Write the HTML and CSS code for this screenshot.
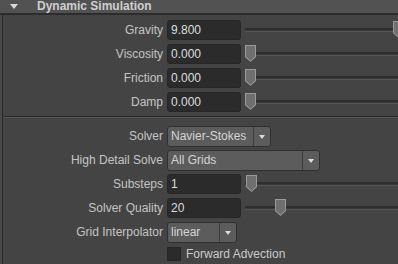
FILE: index.html
```html
<!DOCTYPE html>
<html lang="en">
  <head>
    <meta charset="UTF-8" />
    <title>Dynamic Simulation</title>
    <link rel="stylesheet" href="styles.css">
  </head>
  <body>
    <div class="section">
      <div class="section-head">
        <svg class="caret" width="8" height="5" viewBox="0 0 8 5">
          <polygon points="0,0 8,0 4,5" fill="#d8d8d8" />
        </svg>
        <span>Dynamic Simulation</span>
      </div>
      <div class="section-body">
        <div class="group">
          <div class="row">
            <label>Gravity</label>
            <div class="field">9.800</div>
            <div class="slider"><div class="track"></div><div class="thumb" style="left: 148px"></div></div>
          </div>
          <div class="row">
            <label>Viscosity</label>
            <div class="field">0.000</div>
            <div class="slider"><div class="track"></div><div class="thumb" style="left: 0px"></div></div>
          </div>
          <div class="row">
            <label>Friction</label>
            <div class="field">0.000</div>
            <div class="slider"><div class="track"></div><div class="thumb" style="left: 0px"></div></div>
          </div>
          <div class="row">
            <label>Damp</label>
            <div class="field">0.000</div>
            <div class="slider"><div class="track"></div><div class="thumb" style="left: 0px"></div></div>
          </div>
        </div>

        <div class="sep"></div>

        <div class="group">
          <div class="row">
            <label>Solver</label>
            <div class="dropdown solver">
              <span class="value">Navier-Stokes</span>
              <span class="arrow"></span>
            </div>
          </div>
          <div class="row">
            <label>High Detail Solve</label>
            <div class="dropdown detail">
              <span class="value">All Grids</span>
              <span class="arrow"></span>
            </div>
          </div>
          <div class="row">
            <label>Substeps</label>
            <div class="field">1</div>
            <div class="slider"><div class="track"></div><div class="thumb" style="left: 1px"></div></div>
          </div>
          <div class="row">
            <label>Solver Quality</label>
            <div class="field">20</div>
            <div class="slider"><div class="track"></div><div class="thumb" style="left: 30px"></div></div>
          </div>
          <div class="row">
            <label>Grid Interpolator</label>
            <div class="dropdown interp">
              <span class="value">linear</span>
              <span class="arrow"></span>
            </div>
          </div>
          <div class="row check-row">
            <label></label>
            <span class="checkbox"></span>
            <span class="check-label">Forward Advection</span>
          </div>
        </div>
      </div>
    </div>
  </body>
</html>
```

FILE: styles.css
```css
html,
body {
  height: 100%;
}
body {
  margin: 0;
  background-color: #484848;
  font-family: "Liberation Sans", Arial, sans-serif;
  font-size: 12px;
  color: #c4c4c4;
  overflow: hidden;
}
.section {
  display: flex;
  flex-direction: column;
  height: 100%;
}
.section-head {
  display: flex;
  align-items: center;
  flex-shrink: 0;
  height: 15px;
  margin-top: -2px;
  padding-left: 10px;
  background-color: #525252;
  border-bottom: 2px solid #2c2c2c;
  font-weight: bold;
  color: #cfcfcf;
}
.caret {
  margin-right: 19px;
  margin-top: 1px;
}
.section-body {
  flex: 1;
  margin-left: 2px;
  border-left: 1px solid #2a2a2a;
  background-color: #444444;
  padding-top: 5px;
}
.group {
  display: flex;
  flex-direction: column;
  gap: 4px;
}
.row {
  display: flex;
  align-items: center;
  height: 20px;
}
.row label {
  width: 160px;
  margin-right: 4px;
  text-align: right;
  flex-shrink: 0;
}
.field {
  box-sizing: border-box;
  width: 74px;
  height: 20px;
  line-height: 18px;
  padding-left: 3px;
  background-color: #2b2b2b;
  border: 1px solid #262626;
  border-radius: 3px;
  color: #dedede;
  flex-shrink: 0;
}
.slider {
  position: relative;
  flex: 1;
  height: 20px;
  margin-left: 4px;
}
.track {
  margin-top: 8px;
  height: 1px;
  border-top: 2px solid #2e2e2e;
  border-bottom: 1px solid #555555;
  background-color: #3a3a3a;
}
.thumb {
  position: absolute;
  top: 1px;
  width: 11px;
  height: 17px;
  background-color: #9a9a9a;
  clip-path: polygon(0 0, 100% 0, 100% 70%, 50% 100%, 0 70%);
}
.thumb::after {
  content: "";
  position: absolute;
  left: 1px;
  top: 1px;
  width: 9px;
  height: 15px;
  background-color: #6f6f6f;
  clip-path: polygon(0 0, 100% 0, 100% 68%, 50% 100%, 0 68%);
}
.sep {
  height: 1px;
  margin: 4px 0 8px;
  border-top: 1px solid #2c2c2c;
  background-color: #555555;
}
.dropdown {
  box-sizing: border-box;
  display: flex;
  height: 21px;
  background-color: #5c5c5c;
  border: 1px solid #303030;
  border-radius: 3px;
  color: #d4d4d4;
}
.dropdown .value {
  flex: 1;
  line-height: 19px;
  padding-left: 3px;
  border-right: 1px solid #3c3c3c;
}
.dropdown .arrow {
  position: relative;
  width: 16px;
}
.dropdown .arrow::after {
  content: "";
  position: absolute;
  left: 5px;
  top: 8px;
  border-left: 3px solid transparent;
  border-right: 3px solid transparent;
  border-top: 4px solid #dcdcdc;
}
.solver {
  width: 104px;
}
.detail {
  width: 153px;
}
.interp {
  width: 70px;
}
.check-row {
  height: 15px;
}
.checkbox {
  box-sizing: border-box;
  width: 14px;
  height: 14px;
  background-color: #2b2b2b;
  border: 1px solid #262626;
  margin-right: 5px;
}
.check-label {
  color: #cacaca;
}
```
